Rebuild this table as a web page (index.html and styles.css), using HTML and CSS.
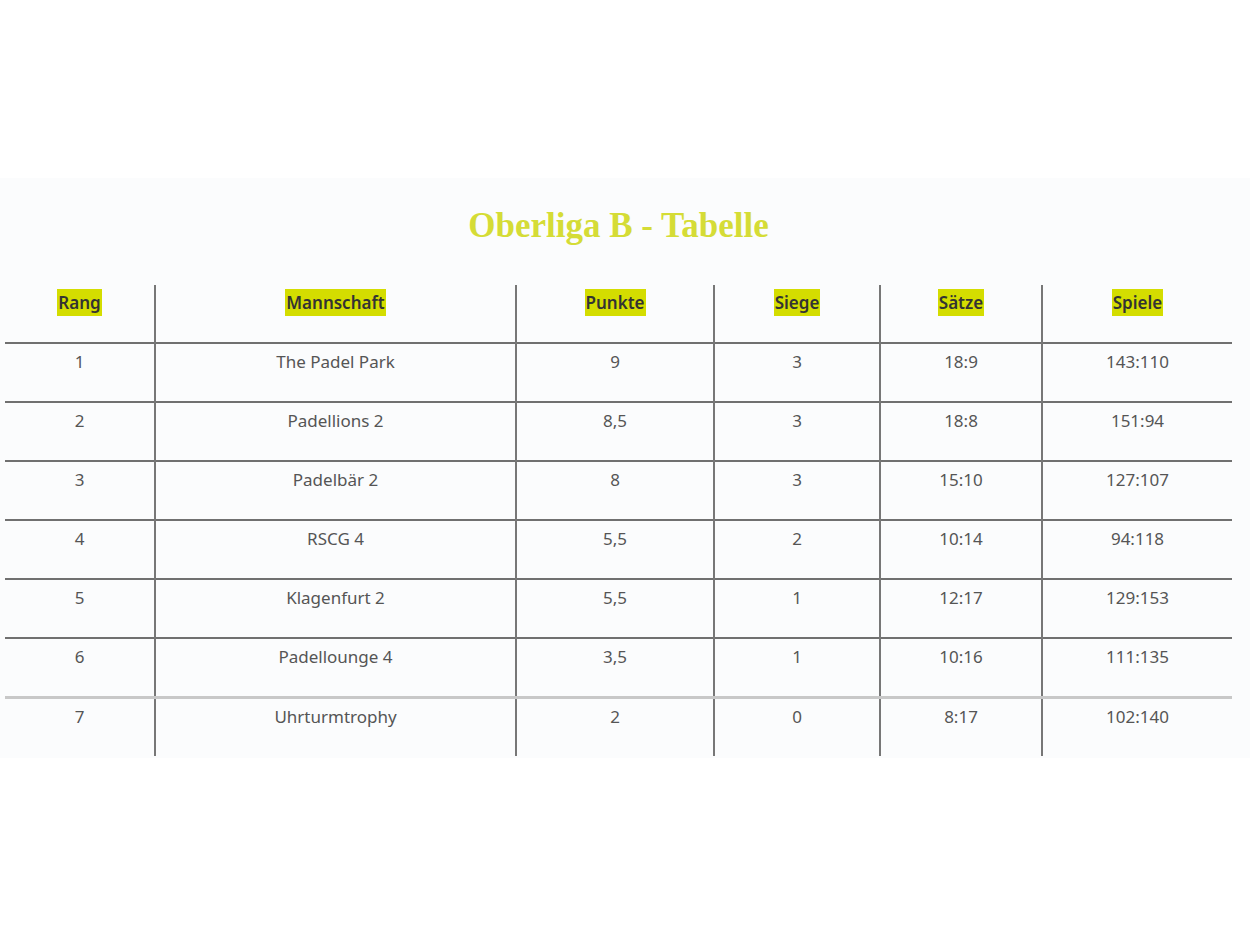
FILE: index.html
```html
<!DOCTYPE html>
<html lang="de">
<head>
<meta charset="utf-8">
<title>Oberliga B - Tabelle</title>
<link rel="stylesheet" href="styles.css">
</head>
<body>
<section class="panel">
  <h1 class="title">Oberliga B - Tabelle</h1>
  <table class="standings">
    <colgroup>
      <col class="c-rang">
      <col class="c-team">
      <col class="c-pts">
      <col class="c-wins">
      <col class="c-sets">
      <col class="c-games">
    </colgroup>
    <thead>
      <tr>
        <th><mark>Rang</mark></th>
        <th><mark>Mannschaft</mark></th>
        <th><mark>Punkte</mark></th>
        <th><mark>Siege</mark></th>
        <th><mark>Sätze</mark></th>
        <th><mark>Spiele</mark></th>
      </tr>
    </thead>
    <tbody>
      <tr><td>1</td><td>The Padel Park</td><td>9</td><td>3</td><td>18:9</td><td>143:110</td></tr>
      <tr><td>2</td><td>Padellions 2</td><td>8,5</td><td>3</td><td>18:8</td><td>151:94</td></tr>
      <tr><td>3</td><td>Padelbär 2</td><td>8</td><td>3</td><td>15:10</td><td>127:107</td></tr>
      <tr><td>4</td><td>RSCG 4</td><td>5,5</td><td>2</td><td>10:14</td><td>94:118</td></tr>
      <tr><td>5</td><td>Klagenfurt 2</td><td>5,5</td><td>1</td><td>12:17</td><td>129:153</td></tr>
      <tr class="light"><td>6</td><td>Padellounge 4</td><td>3,5</td><td>1</td><td>10:16</td><td>111:135</td></tr>
      <tr><td>7</td><td>Uhrturmtrophy</td><td>2</td><td>0</td><td>8:17</td><td>102:140</td></tr>
    </tbody>
  </table>
</section>
</body>
</html>
```

FILE: styles.css
```css
html, body {
  margin: 0;
  padding: 0;
  background: #ffffff;
}

body {
  padding-top: 178px;
  font-family: "Noto Sans", "Open Sans", sans-serif;
}

.panel {
  background: #fbfcfd;
  padding: 28px 18px 2px 5px;
}

.title {
  margin: 0 0 39px;
  text-align: center;
  font-family: "Liberation Serif", "DejaVu Serif", serif;
  font-weight: bold;
  font-size: 35px;
  line-height: 40px;
  color: #d5dc36;
}

.standings {
  width: 1227px;
  border-collapse: collapse;
  table-layout: fixed;
}

.c-rang { width: 150px; }
.c-team { width: 361px; }
.c-pts { width: 198px; }
.c-wins { width: 166px; }
.c-sets { width: 162px; }
.c-games { width: 190px; }

.standings th,
.standings td {
  text-align: center;
  vertical-align: top;
  padding: 8px 6px 29px;
  line-height: 20px;
  border-left: 2px solid #777777;
}

.standings th:first-child,
.standings td:first-child {
  border-left: none;
}

.standings th {
  font-size: 17px;
  font-weight: 600;
  color: #333333;
}

.standings td {
  font-size: 17px;
  font-weight: 400;
  color: #555555;
}

.standings thead tr,
.standings tbody tr {
  border-bottom: 2px solid #707070;
}

.standings tbody tr:last-child {
  border-bottom: none;
}

.standings tbody tr.light {
  border-bottom: 3px solid #c8c8c8;
}

mark {
  background: #d4dd00;
  color: #333333;
  padding: 2px 1px;
}
```
